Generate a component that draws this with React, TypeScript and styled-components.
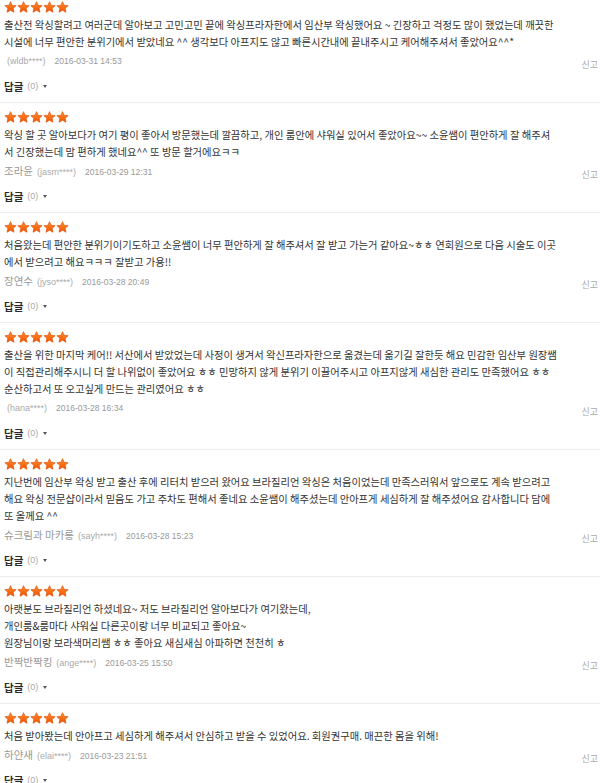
import styled, { createGlobalStyle } from 'styled-components'

type Review = {
  lines: string[]
  name?: string
  id: string
  date: string
}

const reviews: Review[] = [
  {
    lines: [
      '출산전 왁싱할려고 여러군데 알아보고 고민고민 끝에 왁싱프라자한에서 임산부 왁싱했어요 ~ 긴장하고 걱정도 많이 했었는데 깨끗한',
      '시설에 너무 편안한 분위기에서 받았네요 ^^ 생각보다 아프지도 않고 빠른시간내에 끝내주시고 케어해주셔서 좋았어요^^*',
    ],
    id: '(wldb****)',
    date: '2016-03-31 14:53',
  },
  {
    lines: [
      '왁싱 할 곳 알아보다가 여기 평이 좋아서 방문했는데 깔끔하고, 개인 룸안에 샤워실 있어서 좋았아요~~ 소윤쌤이 편안하게 잘 해주셔',
      '서 긴장했는데 맘 편하게 했네요^^ 또 방문 할거에요ㅋㅋ',
    ],
    name: '조라윤',
    id: '(jasm****)',
    date: '2016-03-29 12:31',
  },
  {
    lines: [
      '처음왔는데 편안한 분위기이기도하고 소윤쌤이 너무 편안하게 잘 해주셔서 잘 받고 가는거 같아요~ㅎㅎ 연회원으로 다음 시술도 이곳',
      '에서 받으려고 해요ㅋㅋㅋ 잘받고 가용!!',
    ],
    name: '장연수',
    id: '(jyso****)',
    date: '2016-03-28 20:49',
  },
  {
    lines: [
      '출산을 위한 마지막 케어!! 서산에서 받았었는데 사정이 생겨서 왁신프라자한으로 옮겼는데 옮기길 잘한듯 해요 민감한 임산부 원장쌤',
      '이 직접관리해주시니 더 할 나위없이 좋았어요 ㅎㅎ 민망하지 않게 분위기 이끌어주시고 아프지않게 새심한 관리도 만족했어요 ㅎㅎ',
      '순산하고서 또 오고싶게 만드는 관리였어요 ㅎㅎ',
    ],
    id: '(hana****)',
    date: '2016-03-28 16:34',
  },
  {
    lines: [
      '지난번에 임산부 왁싱 받고 출산 후에 리터치 받으러 왔어요 브라질리언 왁싱은 처음이었는데 만족스러워서 앞으로도 계속 받으려고',
      '해요 왁싱 전문샵이라서 믿음도 가고 주차도 편해서 좋네요 소윤쌤이 해주셨는데 안아프게 세심하게 잘 해주셨어요 감사합니다 담에',
      '또 올께요 ^^',
    ],
    name: '슈크림과 마카롱',
    id: '(sayh****)',
    date: '2016-03-28 15:23',
  },
  {
    lines: [
      '아랫분도 브라질리언 하셨네요~ 저도 브라질리언 알아보다가 여기왔는데,',
      '개인룸&룸마다 샤워실 다른곳이랑 너무 비교되고 좋아요~',
      '원장님이랑 보라색머리쌤 ㅎㅎ 좋아요 새심새심 아파하면 천천히 ㅎ',
    ],
    name: '반짝반짝킹',
    id: '(ange****)',
    date: '2016-03-25 15:50',
  },
  {
    lines: [
      '처음 받아봤는데 안아프고 세심하게 해주셔서 안심하고 받을 수 있었어요. 회원권구매. 매끈한 몸을 위해!',
    ],
    name: '하얀새',
    id: '(elai****)',
    date: '2016-03-23 21:51',
  },
]

const Star = () => (
  <svg width="13" height="12" viewBox="0 0 24 23">
    <defs>
      <linearGradient id="starFill" x1="0" y1="0" x2="0" y2="1">
        <stop offset="0" stopColor="#ff8f33" />
        <stop offset="1" stopColor="#f25200" />
      </linearGradient>
    </defs>
    <path
      d="M12 1.2l3.2 7 7.6.8-5.7 5.1 1.6 7.5L12 17.8l-6.7 3.8 1.6-7.5L1.2 9l7.6-.8z"
      fill="url(#starFill)"
      stroke="#dd4f00"
      strokeWidth="1.2"
      strokeLinejoin="round"
    />
  </svg>
)

const App = () => {
  return (
    <>
      <GlobalStyle />
      <List>
        {reviews.map((r, i) => (
          <Item key={i}>
            <Stars>
              <Star />
              <Star />
              <Star />
              <Star />
              <Star />
            </Stars>
            <Body>
              {r.lines.map((l, j) => (
                <Line key={j}>{l}</Line>
              ))}
            </Body>
            <Meta>
              <Writer>
                {r.name && <Name>{r.name}</Name>}
                <UserId>{r.id}</UserId>
                <Date>{r.date}</Date>
              </Writer>
              <Report>신고</Report>
            </Meta>
            <Reply>
              <ReplyLabel>답글</ReplyLabel>
              <ReplyCount>(0)</ReplyCount>
              <Caret />
            </Reply>
          </Item>
        ))}
      </List>
    </>
  )
}

export default App

const GlobalStyle = createGlobalStyle`
body {
  margin: 0;
  background: #fff;
  font-family: "Noto Sans CJK KR", "Noto Sans", sans-serif;
}
`

const List = styled.div`
width: 600px;
`

const Item = styled.div`
padding: 8px 2px 8px 4px;
border-bottom: 1px solid #ececec;
&:first-child {
  padding-top: 1px;
}
`

const Stars = styled.div`
display: flex;
height: 12px;
margin-bottom: 3px;
`

const Body = styled.div`
font-size: 10.3px;
line-height: 17px;
color: #333;
`

const Line = styled.div`
white-space: nowrap;
`

const Meta = styled.div`
display: flex;
justify-content: space-between;
align-items: flex-start;
margin-top: 2px;
height: 18px;
`

const Writer = styled.div`
display: flex;
align-items: baseline;
line-height: 18px;
`

const Name = styled.span`
font-size: 10.5px;
color: #999;
margin-right: 1px;
`

const UserId = styled.span`
font-family: "Liberation Sans", sans-serif;
font-size: 9px;
color: #aaa;
margin-left: 3px;
`

const Date = styled.span`
font-family: "Liberation Sans", sans-serif;
font-size: 8.5px;
color: #999;
margin-left: 9px;
`

const Report = styled.span`
font-size: 9px;
color: #aaa;
line-height: 18px;
padding-top: 4px;
`

const Reply = styled.div`
display: flex;
align-items: center;
gap: 4px;
margin-top: 8px;
height: 16px;
`

const ReplyLabel = styled.span`
font-size: 10.5px;
font-weight: 700;
color: #2a2a2a;
`

const ReplyCount = styled.span`
font-family: "Liberation Sans", sans-serif;
font-size: 9px;
color: #aaa;
`

const Caret = styled.span`
width: 0;
height: 0;
margin-left: 1px;
border-left: 2.5px solid transparent;
border-right: 2.5px solid transparent;
border-top: 3px solid #555;
`
